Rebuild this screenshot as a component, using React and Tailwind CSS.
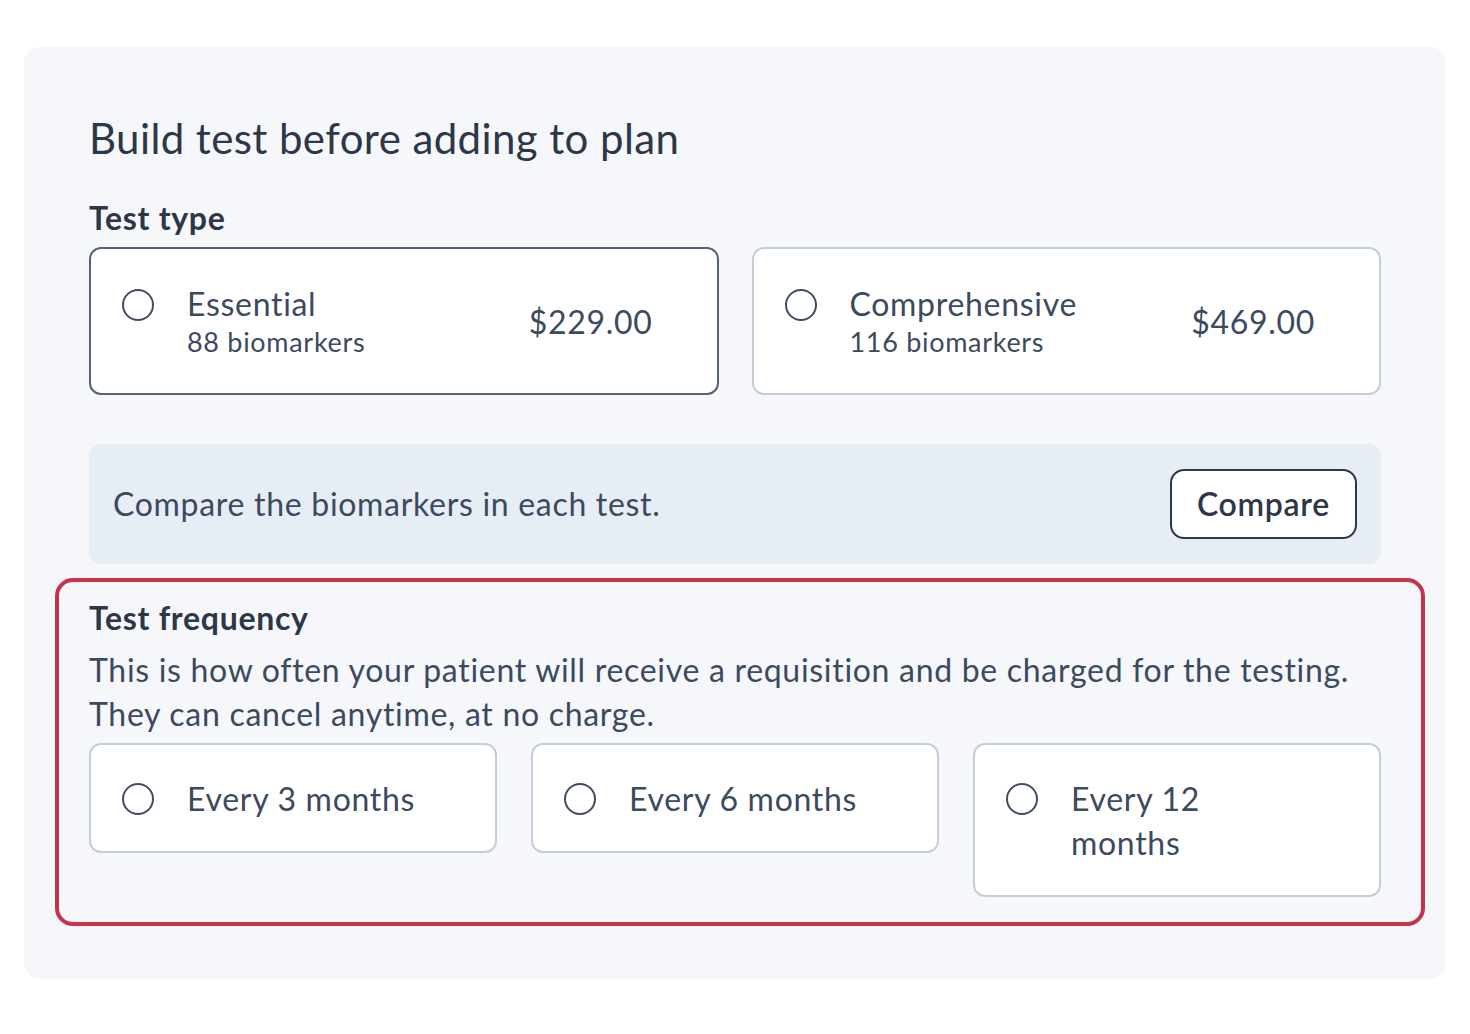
import React from 'react';

const Radio = ({ offset }) => (
  <span
    className={
      offset
        ? 'mt-[6px] block h-[32px] w-[32px] shrink-0 rounded-full border-2 border-[#3f4c62] bg-white'
        : 'mt-[5px] block h-[32px] w-[32px] shrink-0 rounded-full border-2 border-[#3f4c62] bg-white'
    }
  ></span>
);

const TypeCard = ({ name, count, price, selected }) => (
  <div
    className={
      selected
        ? 'flex items-start rounded-[12px] border-2 border-[#56617a] bg-white pl-[31px] pr-[64px] pt-[35px] pb-[33px]'
        : 'flex items-start rounded-[12px] border-2 border-[#c4cdda] bg-white pl-[31px] pr-[64px] pt-[35px] pb-[33px]'
    }
  >
    <Radio />
    <div className="ml-[33px] flex-1">
      <div className="text-[32px] leading-[40px]">{name}</div>
      <div className="text-[27px] leading-[36px]">{count}</div>
    </div>
    <div className="self-center text-[32px] leading-[40px]">{price}</div>
  </div>
);

const FreqCard = ({ label }) => (
  <div className="flex items-start rounded-[12px] border-2 border-[#c4cdda] bg-white pl-[31px] pr-[40px] pt-[32px] pb-[30px]">
    <Radio offset />
    <div className="ml-[33px] max-w-[236px] text-[32px] leading-[44px]">{label}</div>
  </div>
);

const App = () => {
  return (
    <div
      className="min-h-screen bg-white pt-[47px] px-[24px] tracking-[0.7px] text-[#3c4a5f]"
      style={{ fontFamily: 'Lato, "Noto Sans", sans-serif' }}
    >
      <div className="rounded-[16px] bg-[#f5f7fa] p-[65px] pb-[53px]">
        <h1 className="text-[42px] leading-[52px] tracking-[0.4px] text-[#2d3748]">Build test before adding to plan</h1>

        {/* Test type */}
        <h2 className="mt-[34px] text-[32px] font-bold leading-[40px] text-[#2d3748]">Test type</h2>
        <div className="mt-[9px] grid grid-cols-2 gap-[33px]">
          <TypeCard name="Essential" count="88 biomarkers" price="$229.00" selected />
          <TypeCard name="Comprehensive" count="116 biomarkers" price="$469.00" />
        </div>

        {/* Compare banner */}
        <div className="mt-[49px] flex items-center justify-between rounded-[12px] bg-[#e6edf5] py-[25px] pl-[24px] pr-[24px]">
          <span className="text-[32px]">Compare the biomarkers in each test.</span>
          <button className="h-[70px] rounded-[14px] border-2 border-[#2d3748] bg-white px-[25px] text-[32px] font-semibold text-[#2d3748]">
            Compare
          </button>
        </div>

        {/* Test frequency */}
        <div className="-ml-[34px] -mr-[44px] mt-[14px] rounded-[18px] border-4 border-[#c8334a] pl-[30px] pr-[40px] pt-[16px] pb-[25px]">
          <h2 className="text-[32px] font-bold leading-[40px] text-[#2d3748]">Test frequency</h2>
          <p className="mt-[10px] text-[32px] leading-[44px]">
            This is how often your patient will receive a requisition and be charged for the testing.
            <br />
            They can cancel anytime, at no charge.
          </p>
          <div className="mt-[7px] grid grid-cols-3 items-start gap-[34px]">
            <FreqCard label="Every 3 months" />
            <FreqCard label="Every 6 months" />
            <FreqCard label="Every 12 months" />
          </div>
        </div>
      </div>
    </div>
  );
};

export default App;
